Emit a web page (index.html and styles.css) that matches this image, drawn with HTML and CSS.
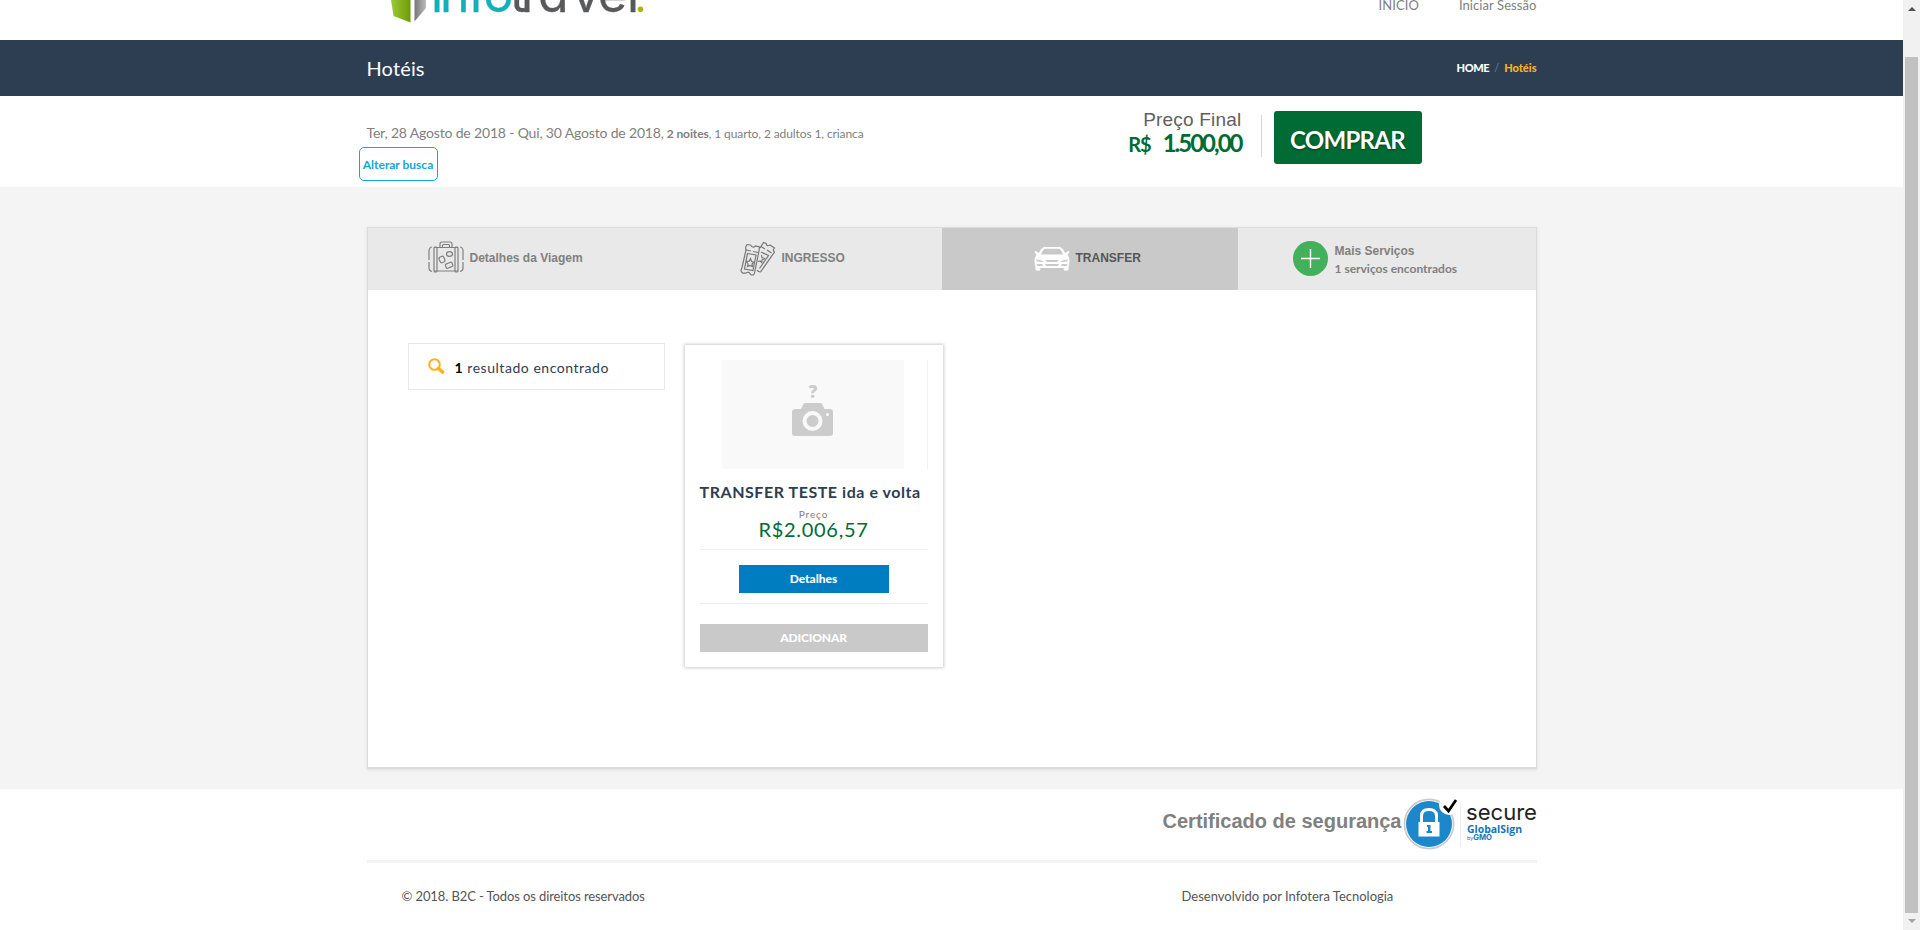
FILE: index.html
```html
<!DOCTYPE html>
<html lang="pt-BR">
<head>
<meta charset="utf-8">
<title>Hotéis</title>
<link rel="stylesheet" href="styles.css">
</head>
<body>
<div class="page">
  <header class="top">
    <div class="wrap top-row">
      <svg class="logo" width="290" height="30" viewBox="0 0 290 30">
        <defs>
          <linearGradient id="g1"><stop offset="0" stop-color="#9cc93a"/><stop offset="1" stop-color="#6c9c04"/></linearGradient>
          <linearGradient id="g2"><stop offset="0" stop-color="#777"/><stop offset="1" stop-color="#bbb"/></linearGradient>
        </defs>
        <path fill="url(#g1)" d="M22 0H41.500V22.500L24.500 16Z"/>
        <path fill="url(#g2)" d="M45.500 0H57V8L45.500 21.500Z"/>
        <text class="logo-text teal" y="12" x="62 71 99 114.500">info</text>
        <text class="logo-text gray" y="12" x="141 152 169 203 229 258">travel</text>
        <circle cx="271.500" cy="9.200" r="2.800" fill="#a9b90c"/>
      </svg>
      <nav class="menu"><a>INÍCIO</a><a>Iniciar Sessão</a></nav>
    </div>
  </header>
  <div class="titlebar">
    <div class="wrap title-row">
      <h1>Hotéis</h1>
      <div class="crumbs"><b>HOME</b><span>/</span><b class="here">Hotéis</b></div>
    </div>
  </div>
  <section class="summary">
    <div class="wrap summary-row">
      <div class="search">
        <p><span class="dates">Ter, 28 Agosto de 2018 - Qui, 30 Agosto de 2018,</span> <b>2 noites</b>, 1 quarto, 2 adultos 1, crianca</p>
        <a class="change">Alterar busca</a>
      </div>
      <div class="total">
        <div class="total-label">Preço Final</div>
        <div class="total-value"><small>R$</small><span>1.500,00</span></div>
      </div>
      <a class="buy">COMPRAR</a>
    </div>
  </section>
  <main class="content">
    <div class="panel">
      <div class="tabs">
        <div class="tab t1">
          <svg width="36" height="32" viewBox="0 0 36 32" fill="none" stroke="#808080" stroke-width="1.200">
            <path d="M12 6V3Q12 1 14 1H22Q24 1 24 3V6M14.500 6V4.500Q14.500 3.500 15.500 3.500H20.500Q21.500 3.500 21.500 4.500V6"/>
            <path d="M6 6.500H30M6 30H30M4 6Q1 6.500 1 10V19M1 21V27Q1 30 4 30.500M32 6Q35 6.500 35 10V19M35 21V27Q35 30 32 30.500"/>
            <rect x="6" y="6" width="3" height="25" rx="1"/><rect x="27" y="6" width="3" height="25" rx="1"/>
            <ellipse cx="21.500" cy="13" rx="3" ry="2.300"/><rect x="11.500" y="15.500" width="5" height="6" rx="1.800" transform="rotate(-25 14 18.500)"/><rect x="17.500" y="22" width="7" height="4.500" rx="1" transform="rotate(-22 21 24)"/>
          </svg>
          <b>Detalhes da Viagem</b>
        </div>
        <div class="tab t2">
          <svg width="36" height="36" viewBox="0 0 36 36" fill="none" stroke="#777" stroke-width="1.200">
            <path d="M20 7L23.500 1.500L26 2.500Q27 6 30 4L34.500 7Q32 9 34.500 11L20.500 31Q18 31 17 29"/>
            <path d="M21 5.500L25 8M27 9L31.500 12M21 11L28.500 14.500L19.500 27.500"/>
            <path d="M7 3.500L10.500 4Q12.500 7.500 15.500 5L19.500 6L19 10L14.500 32Q14 35 10.500 33.500Q9 30 6 32Q1 33 1 29L2 26.500L6 9Q5 6 7 3.500Z"/>
            <path d="M6 9L11 10M13 10.500L18.500 11.500M7.500 12.500L16 14L13 29.500L4.500 28Z"/>
            <path d="M10.500 17.500L11.500 20.500L14 21L12 23L12.500 25.500L10 24.500L7.500 25.500L8 23L6.500 20.500L9.200 20.200Z"/>
            <path d="M21.500 14L22 16.500L24.500 17.500L22 19L21.800 21.500L20 20L18 20.500"/>
          </svg>
          <b>INGRESSO</b>
        </div>
        <div class="tab t3">
          <svg width="36" height="24" viewBox="0 0 36 24" fill="#fff">
            <path fill-rule="evenodd" d="M10 0H26Q29 1 31 6L34.500 4L35.500 5L33.500 8Q36 11 35.500 15L34.500 21V23Q33 24 30 23.500L29.500 21H6.500L6 23.500Q3 24 1.500 23V21L.5 15Q0 11 2.500 8L.5 5L1.500 4L5 6Q7 1 10 0ZM11 1.800Q8.500 3 7 7.500H29Q27.500 3 25 1.800ZM2 12.500L3 14.500L9.500 15Q8 12.500 2 12.500ZM34 12.500L33 14.500L26.500 15Q28 12.500 34 12.500ZM11.500 13L13 15H23L24.500 13ZM2.500 17L3.500 19H9L8 17ZM33.500 17L32.500 19H27L28 17ZM11 17L12.500 19H23.500L25 17Z"/>
          </svg>
          <b>TRANSFER</b>
        </div>
        <div class="tab t4">
          <svg width="35" height="35" viewBox="0 0 35 35"><circle cx="17.500" cy="17.500" r="17.500" fill="#43b05c"/><path d="M17.500 8V27M8 17.500H27" stroke="#fff" stroke-width="1.400"/></svg>
          <div class="more"><b>Mais Serviços</b><span>1 serviços encontrados</span></div>
        </div>
      </div>
      <div class="results">
        <div class="count">
          <svg width="17" height="17" viewBox="0 0 17 17" fill="none" stroke="#ffb11b"><circle cx="6.500" cy="6.500" r="5.300" stroke-width="2"/><path d="M10.500 10.500L14.500 14" stroke-width="3.600" stroke-linecap="round"/></svg>
          <p><b>1</b> resultado encontrado</p>
        </div>
        <article class="card">
          <div class="photo">
            <svg width="182" height="109" viewBox="0 0 182 109">
              <rect width="182" height="109" fill="#f9f9f9"/>
              <text class="question" x="91" y="38" text-anchor="middle">?</text>
              <path fill="#ccc" d="M74 49H79L81.500 44Q82 43 83.500 43H98Q99.500 43 100 44L102.500 49H108Q111 49 111 52V73Q111 76 108 76H73Q70 76 70 73V52Q70 49 74 49Z"/>
              <circle cx="90.500" cy="61" r="8" fill="#ccc" stroke="#f9f9f9" stroke-width="4"/><circle cx="105.500" cy="54.500" r="1.500" fill="#fff"/>
            </svg>
          </div>
          <h2>TRANSFER TESTE ida e volta</h2>
          <div class="price-label">Preço</div>
          <div class="price">R$2.006,57</div>
          <div class="actions"><a class="details">Detalhes</a></div>
          <a class="add">ADICIONAR</a>
        </article>
      </div>
    </div>
  </main>
  <footer class="wrap foot">
    <div class="cert">
      <b>Certificado de segurança</b>
      <svg width="134" height="52" viewBox="0 0 134 52">
        <circle cx="26" cy="26" r="24.600" fill="#fff" stroke="#cbcbcb" stroke-width="1.700"/>
        <circle cx="26" cy="26" r="23" fill="#1d87cb"/>
        <circle cx="46" cy="7" r="10" fill="#fff"/>
        <path d="M18.500 26V18Q18.500 11.500 26 11.500T33.500 18V26" fill="none" stroke="#fff" stroke-width="3"/>
        <rect x="15.500" y="24" width="21" height="14.500" fill="#fff"/>
        <path d="M24 27H27.500V33H29V35H23.500V33H25V29H24Z" fill="#1d87cb"/>
        <path d="M41 8L45.500 13L53 2" fill="none" stroke="#000" stroke-width="2.800"/>
        <path d="M57.500 4V49" stroke="#eee"/>
        <text class="seal-name" x="63" y="22" textLength="71" lengthAdjust="spacingAndGlyphs">secure</text>
        <text class="seal-brand" x="64" y="35" textLength="55" lengthAdjust="spacingAndGlyphs">GlobalSign</text>
        <text class="seal-by" x="64" y="42" textLength="25" lengthAdjust="spacingAndGlyphs">by<tspan class="gmo">GMO</tspan></text>
      </svg>
    </div>
    <div class="legal"><span>© 2018. B2C - Todos os direitos reservados</span><span class="dev">Desenvolvido por Infotera Tecnologia</span></div>
  </footer>
</div>
<div class="scrollbar"><i class="up"></i><i class="thumb"></i><i class="down"></i></div>
</body>
</html>
```
FILE: styles.css
```css
* { box-sizing: border-box; }
body { margin: 0; height: 930px; overflow: hidden; display: flex; font-family: Lato, sans-serif; color: #808080; background: #fff; }
h1, h2, p { margin: 0; font-weight: 400; }
.page { flex: 1; display: flex; flex-direction: column; }
.wrap { width: 1170px; margin: 0 auto; }
.top { height: 40px; overflow: hidden; }
.top-row { display: flex; justify-content: space-between; }
.logo { margin-left: 2px; }
.logo-text { font-family: Inter, sans-serif; font-size: 50px; font-weight: 400; font-feature-settings: "cv11"; }
.teal { fill: #13afba; stroke: #13afba; stroke-width: .3; }
.gray { fill: #58595b; stroke: #58595b; stroke-width: .3; }
.menu { display: flex; gap: 40px; font-size: 13px; line-height: 16px; margin-top: -3px; letter-spacing: .08px; }
.titlebar { height: 56px; background: #2d3e52; }
.title-row { height: 56px; display: flex; justify-content: space-between; align-items: center; }
h1 { color: #fff; font-size: 20px; line-height: 24px; letter-spacing: .15px; }
.crumbs { display: flex; gap: 5px; font-size: 11px; line-height: 13px; color: #5b82a8; padding-bottom: 1px; }
.crumbs b { color: #fff; font-weight: 900; letter-spacing: -.4px; }
.crumbs .here { color: #fdb220; letter-spacing: 0; }
.summary { height: 91px; }
.summary-row { display: flex; align-items: flex-start; }
.search { width: 748px; padding-top: 27px; font-size: 12px; line-height: 19px; letter-spacing: -.1px; }
.dates { font-size: 14px; letter-spacing: -.17px; }
.change { display: block; width: 79px; height: 34px; margin: 4px 0 0 -8px; border: 1px solid #13a6da; border-radius: 5px; color: #13a6da; font-weight: 700; font-size: 12px; line-height: 34px; text-align: center; white-space: nowrap; letter-spacing: 0; }
.total { width: 147px; height: 42px; margin-top: 19px; padding-right: 19px; border-right: 1px solid #d5d5d5; text-align: right; }
.total-label { font: 19px/20px "Liberation Sans", sans-serif; letter-spacing: .2px; color: #606060; margin-top: -5px; }
.total-value { display: flex; justify-content: flex-end; align-items: baseline; gap: 12px; color: #006b35; font-size: 24px; line-height: 26px; font-weight: 700; letter-spacing: -2px; }
.total-value small { font-size: 20px; letter-spacing: -1px; }
.buy { width: 148px; height: 53px; margin: 15px 0 0 12px; background: #006b35; border-radius: 3px; color: #fff; font-size: 24px; line-height: 57px; font-weight: 700; text-align: center; letter-spacing: -.7px; text-shadow: 0 1px 2px #003d1e; }
.content { height: 602px; background: #f4f4f4; padding-top: 40px; }
.panel { width: 1170px; height: 542px; margin: 0 auto; background: #fff; border: 1px solid #dcdcdc; border-bottom-width: 2px; box-shadow: 0 1px 3px #ddd; }
.tabs { display: grid; grid-template-columns: 309px 265px 296px 298px; height: 62px; background: #e9e9e9; font: 12px "Liberation Sans", sans-serif; }
.tab { display: flex; align-items: center; }
.t1 { padding-left: 60px; gap: 6px; }
.t2 { padding-left: 63px; gap: 6px; }
.t3 { padding-left: 92px; gap: 6px; background: #c9c9c9; color: #555; }
.t4 { padding-left: 55px; gap: 7px; }
.t1 svg { margin-bottom: 5px; }
.t1 b, .t2 b, .t3 b { padding-bottom: 2px; }
.t4 svg { margin-bottom: 1px; }
.more { display: flex; flex-direction: column; line-height: 18px; padding-top: 2px; }
.more span { font-family: Lato, sans-serif; font-weight: 700; }
.results { display: flex; align-items: flex-start; padding: 53px 0 0 40px; gap: 20px; }
.count { width: 257px; height: 47px; border: 1px solid #e8e8e8; display: flex; align-items: center; padding-left: 19px; gap: 10px; color: #2d3e52; font-size: 14px; letter-spacing: .54px; }
.count svg { margin-bottom: 1px; }
.count p { padding-top: 2px; }
.count b { color: #000; }
.card { width: 258px; height: 322px; margin-top: 2px; padding: 15px; box-shadow: 0 0 3px 1px #ccc; text-align: center; }
.photo { height: 109px; border-right: 1px solid #f2f2f2; padding-left: 22px; display: flex; }
.question { font: 900 17px "Open Sans", sans-serif; fill: #ccc; }
h2 { margin-top: 13px; font-size: 16px; line-height: 20px; font-weight: 700; color: #2d3e52; letter-spacing: .55px; white-space: nowrap; text-align: left; }
.price-label { margin-top: 6px; font-size: 10px; line-height: 12px; letter-spacing: .9px; }
.price { font-size: 20px; line-height: 18px; color: #006b35; letter-spacing: .7px; }
.actions { margin-top: 11px; height: 55px; padding-top: 15px; border-top: 1px solid #eee; border-bottom: 1px solid #eee; }
.details { display: block; width: 150px; height: 28px; margin: 0 auto; background: #007cc0; color: #fff; font-size: 12px; line-height: 28px; font-weight: 900; }
.add { display: block; height: 28px; margin-top: 20px; background: #c9c9c9; color: #fff; font-size: 12px; line-height: 28px; font-weight: 900; letter-spacing: -.15px; }
.foot { height: 141px; }
.cert { height: 74px; border-bottom: 3px solid #f4f4f4; padding-top: 9px; display: flex; justify-content: flex-end; gap: 1px; }
.cert b { font: bold 20px/42px "Liberation Sans", sans-serif; padding-top: 2px; }
.seal-name { font: 400 22px Inter, sans-serif; fill: #222; }
.seal-brand { font: 700 11px "Open Sans", sans-serif; fill: #1274bd; }
.seal-by { font: 5px Inter, sans-serif; fill: #1274bd; }
.gmo { font-size: 7px; font-weight: 700; }
.legal { display: grid; grid-template-columns: 780px 1fr; padding: 23px 0 0 35px; font-size: 13px; line-height: 20px; color: #555; letter-spacing: -.1px; }
.dev { letter-spacing: 0; }
.scrollbar { width: 17px; background: #f1f1f1; display: flex; flex-direction: column; align-items: center; }
.up { margin-top: 7px; border: solid transparent; border-width: 0 4px 4px; border-bottom-color: #505050; }
.thumb { width: 13px; height: 856px; margin: 46px 0 6px; background: #c1c1c1; }
.down { border: solid transparent; border-width: 4px 4px 0; border-top-color: #a3a3a3; }
```
